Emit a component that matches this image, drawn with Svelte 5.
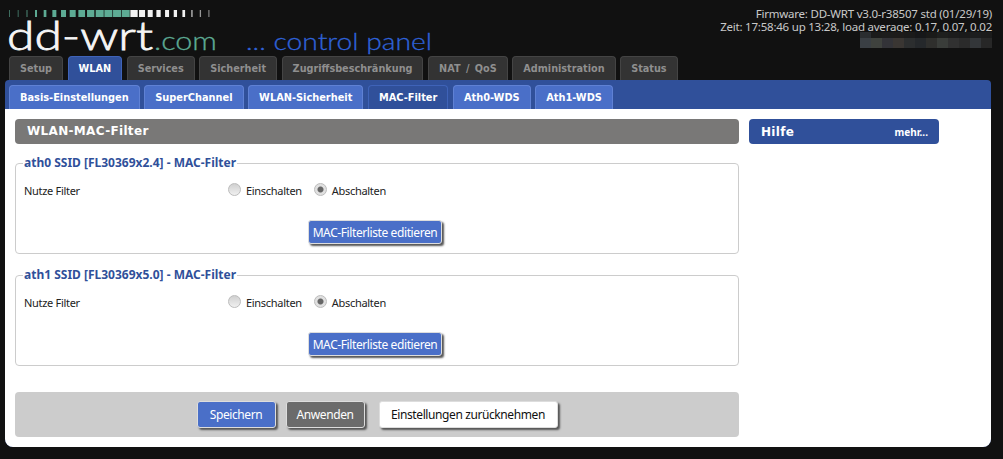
<script>
  const tabs = ["Setup", "WLAN", "Services", "Sicherheit", "Zugriffsbeschränkung", "NAT / QoS", "Administration", "Status"];
  const subTabs = ["Basis-Einstellungen", "SuperChannel", "WLAN-Sicherheit", "MAC-Filter", "Ath0-WDS", "Ath1-WDS"];
  const radios = [
    { ssid: "ath0 SSID [FL30369x2.4] - MAC-Filter", name: "ath0" },
    { ssid: "ath1 SSID [FL30369x5.0] - MAC-Filter", name: "ath1" }
  ];

  // logo tick marks, widths in px: first 14 teal, the rest white
  const ticks = [1, 1, 1.3, 2, 2.7, 4, 5, 6, 6.7, 7.3, 8, 8, 8, 8, 7.3, 6, 5, 4.3, 4, 3.3, 2.7, 1.7, 1.3, 1];

  // blurred-out line under the uptime
  const mosaic = [
    ["#2a2d30", "#1b1b1b", "#1c1c1c", "#1d1b1a", "#1a1a1a", "#161719", "#1a1a19", "#1e1f1e", "#1c1c1c", "#1a1a1a", "#1c1d1e", "#1b1b1b"],
    ["#3a3f44", "#3f423e", "#333338", "#3a3633", "#2c2e2f", "#25282b", "#2f2f2d", "#3a3d3a", "#313131", "#2b2b2b", "#333639", "#272727"]
  ];
</script>

<div class="page">
  <header>
    <div class="logo">
      <svg width="440" height="64" viewBox="0 0 440 64">
        {#each ticks as w, i}
          <rect x={9 + i * 8.67} y="10" width={w} height="7" fill={i < 14 ? "#5dab94" : "#f2f2f2"} opacity={i < 3 || i > 20 ? 0.6 : 1} />
        {/each}
        <text class="dd" x="7" y="50" textLength="146" lengthAdjust="spacingAndGlyphs">dd-wrt</text>
        <text class="com" x="154" y="50" textLength="63" lengthAdjust="spacingAndGlyphs">.com</text>
        <text class="cp" x="246" y="50" textLength="186" lengthAdjust="spacingAndGlyphs">... control panel</text>
      </svg>
    </div>
    <div class="status">
      <div>Firmware: DD-WRT v3.0-r38507 std (01/29/19)</div>
      <div>Zeit: 17:58:46 up 13:28, load average: 0.17, 0.07, 0.02</div>
      <div class="mosaic">
        {#each mosaic as row, i}
          <div class="mrow" class:tall={i === 1}>
            {#each row as c}
              <span style="background:{c}"></span>
            {/each}
          </div>
        {/each}
      </div>
    </div>
  </header>

  <nav class="tabs">
    {#each tabs as t}
      <div class="tab" class:on={t === "WLAN"}>{t}</div>
    {/each}
  </nav>

  <main>
    <nav class="subtabs">
      {#each subTabs as t}
        <div class="subtab" class:on={t === "MAC-Filter"}>{t}</div>
      {/each}
    </nav>
    <div class="content">
      <div class="left">
        <h2>WLAN-MAC-Filter</h2>
        {#each radios as r}
          <fieldset>
            <legend>{r.ssid}</legend>
            <div class="row">
              <div class="label">Nutze Filter</div>
              <label><input type="radio" name={r.name} /> Einschalten</label>
              <label><input type="radio" name={r.name} checked /> Abschalten</label>
            </div>
            <div class="center">
              <button class="btn blue">MAC-Filterliste editieren</button>
            </div>
          </fieldset>
        {/each}
        <div class="actions">
          <button class="btn blue">Speichern</button>
          <button class="btn grey">Anwenden</button>
          <button class="btn white">Einstellungen zurücknehmen</button>
        </div>
      </div>
      <aside>
        <div class="help"><b>Hilfe</b><span>mehr...</span></div>
      </aside>
    </div>
  </main>
</div>

<style>
  :global(body) {
    background: #111;
    font-family: "DejaVu Sans", sans-serif;
  }

  .page {
    width: 1003px;
    height: 459px;
    overflow: hidden;
  }

  header {
    height: 56px;
    display: flex;
    justify-content: space-between;
  }

  .logo svg {
    display: block;
  }

  .dd {
    font: 300 39px "Lato", sans-serif;
    fill: #f5f5f5;
    stroke: #f5f5f5;
    stroke-width: 0.8;
  }

  .com {
    font: 300 26px "Lato", sans-serif;
    fill: #5dab94;
    stroke: #5dab94;
    stroke-width: 0.3;
  }

  .cp {
    font: 300 24px "Lato", sans-serif;
    fill: #2f62d8;
    stroke: #2f62d8;
    stroke-width: 0.3;
  }

  .status {
    width: 400px;
    padding: 7px 11px 0 0;
    text-align: right;
    font: 11.5px/13px "Noto Sans", sans-serif;
    letter-spacing: -0.22px;
    color: #c9c9c9;
  }

  .mosaic {
    width: 132px;
    margin: -1px 0 0 auto;
  }

  .mrow {
    display: flex;
    height: 6px;
  }

  .mrow.tall {
    height: 10px;
  }

  .mrow span {
    flex: 1;
  }

  .tabs {
    display: flex;
    gap: 4.6px;
    padding-left: 9px;
    height: 24px;
  }

  .tab {
    background: #333;
    border: 1px solid #444;
    border-bottom: 0;
    border-radius: 4px 4px 0 0;
    padding: 0 10px;
    font: 700 9.7px/24px "DejaVu Sans", sans-serif;
    word-spacing: 2px;
    color: #8f8f8f;
  }

  .tab.on {
    background: #30509a;
    border-color: #3f63b8;
    color: #fff;
  }

  main {
    margin-left: 5px;
    width: 986px;
    background: #30509a;
    border-radius: 4px 4px 8px 8px;
    overflow: hidden;
  }

  .subtabs {
    display: flex;
    gap: 4.6px;
    padding: 5px 0 0 4px;
    height: 29px;
    box-sizing: border-box;
  }

  .subtab {
    background: #4a6fc8;
    border: 1px solid #5f81d4;
    border-bottom: 0;
    border-radius: 4px 4px 0 0;
    padding: 0 10px;
    font: 700 9.8px/24px "DejaVu Sans", sans-serif;
    color: #fff;
  }

  .subtab.on {
    background: #30509a;
    border-color: #3f63b8;
  }

  .content {
    background: #fff;
    height: 338px;
    padding: 10px 52px 0 10px;
    display: flex;
    gap: 10px;
    box-sizing: border-box;
  }

  .left {
    width: 724px;
  }

  aside {
    width: 190px;
  }

  h2 {
    margin: 0;
    background: #797877;
    color: #fff;
    height: 25px;
    border-radius: 4px;
    padding-left: 12px;
    font: 700 12px/25px "DejaVu Sans", sans-serif;
    letter-spacing: 0.33px;
  }

  .help {
    background: #30509a;
    color: #fff;
    height: 25px;
    border-radius: 4px;
    padding: 0 11px 0 12px;
    display: flex;
    justify-content: space-between;
    align-items: center;
  }

  .help b {
    font: 700 12px "DejaVu Sans", sans-serif;
    letter-spacing: 0.33px;
  }

  .help span {
    font: 700 10px "Noto Sans", sans-serif;
  }

  fieldset {
    margin: 12px 0 0;
    padding: 0 8px;
    height: 98px;
    box-sizing: border-box;
    border: 1px solid #ccc;
    border-radius: 4px;
    min-width: 0;
  }

  fieldset + fieldset {
    margin-top: 14px;
  }

  legend {
    padding: 0 1px;
    margin-left: -1px;
    font: 700 12px/14px "Noto Sans", sans-serif;
    color: #30509a;
  }

  .row {
    display: flex;
    align-items: center;
    margin-top: 14px;
    font: 11px/14px "Noto Sans", sans-serif;
    letter-spacing: -0.3px;
    color: #222;
  }

  .label {
    width: 204px;
  }

  .row label {
    display: flex;
    align-items: center;
    gap: 5px;
    margin-right: 12px;
  }

  input[type="radio"] {
    appearance: none;
    margin: 0;
    width: 13px;
    height: 13px;
    border-radius: 50%;
    border: 1px solid #bcbcbc;
    background: linear-gradient(#d0d0d0, #f0f0f0);
    position: relative;
    top: -2px;
  }

  input[type="radio"]:checked {
    background: radial-gradient(circle, #666 0 2.5px, #e0e0e0 3.5px);
  }

  .center {
    text-align: center;
    margin-top: 22px;
  }

  .btn {
    font: 12px "Noto Sans", sans-serif;
    letter-spacing: -0.4px;
    border-radius: 3px;
    border: 1px solid #ddd;
    box-shadow: 2px 2px 2px #555;
    padding: 0;
  }

  .blue {
    background: #4a6fc8;
    color: #fff;
  }

  .grey {
    background: #6b6b6b;
    color: #fff;
  }

  .white {
    background: #fff;
    color: #111;
    margin-left: 4px;
  }

  .center .btn {
    height: 24px;
    width: 134px;
    margin-right: 4px;
  }

  .actions {
    margin-top: 26px;
    height: 45px;
    background: #ccc;
    border-radius: 4px;
    display: flex;
    justify-content: center;
    align-items: center;
    gap: 10px;
  }

  .actions .btn {
    height: 27px;
    width: 79px;
  }

  .actions .white {
    width: 179px;
  }
</style>
